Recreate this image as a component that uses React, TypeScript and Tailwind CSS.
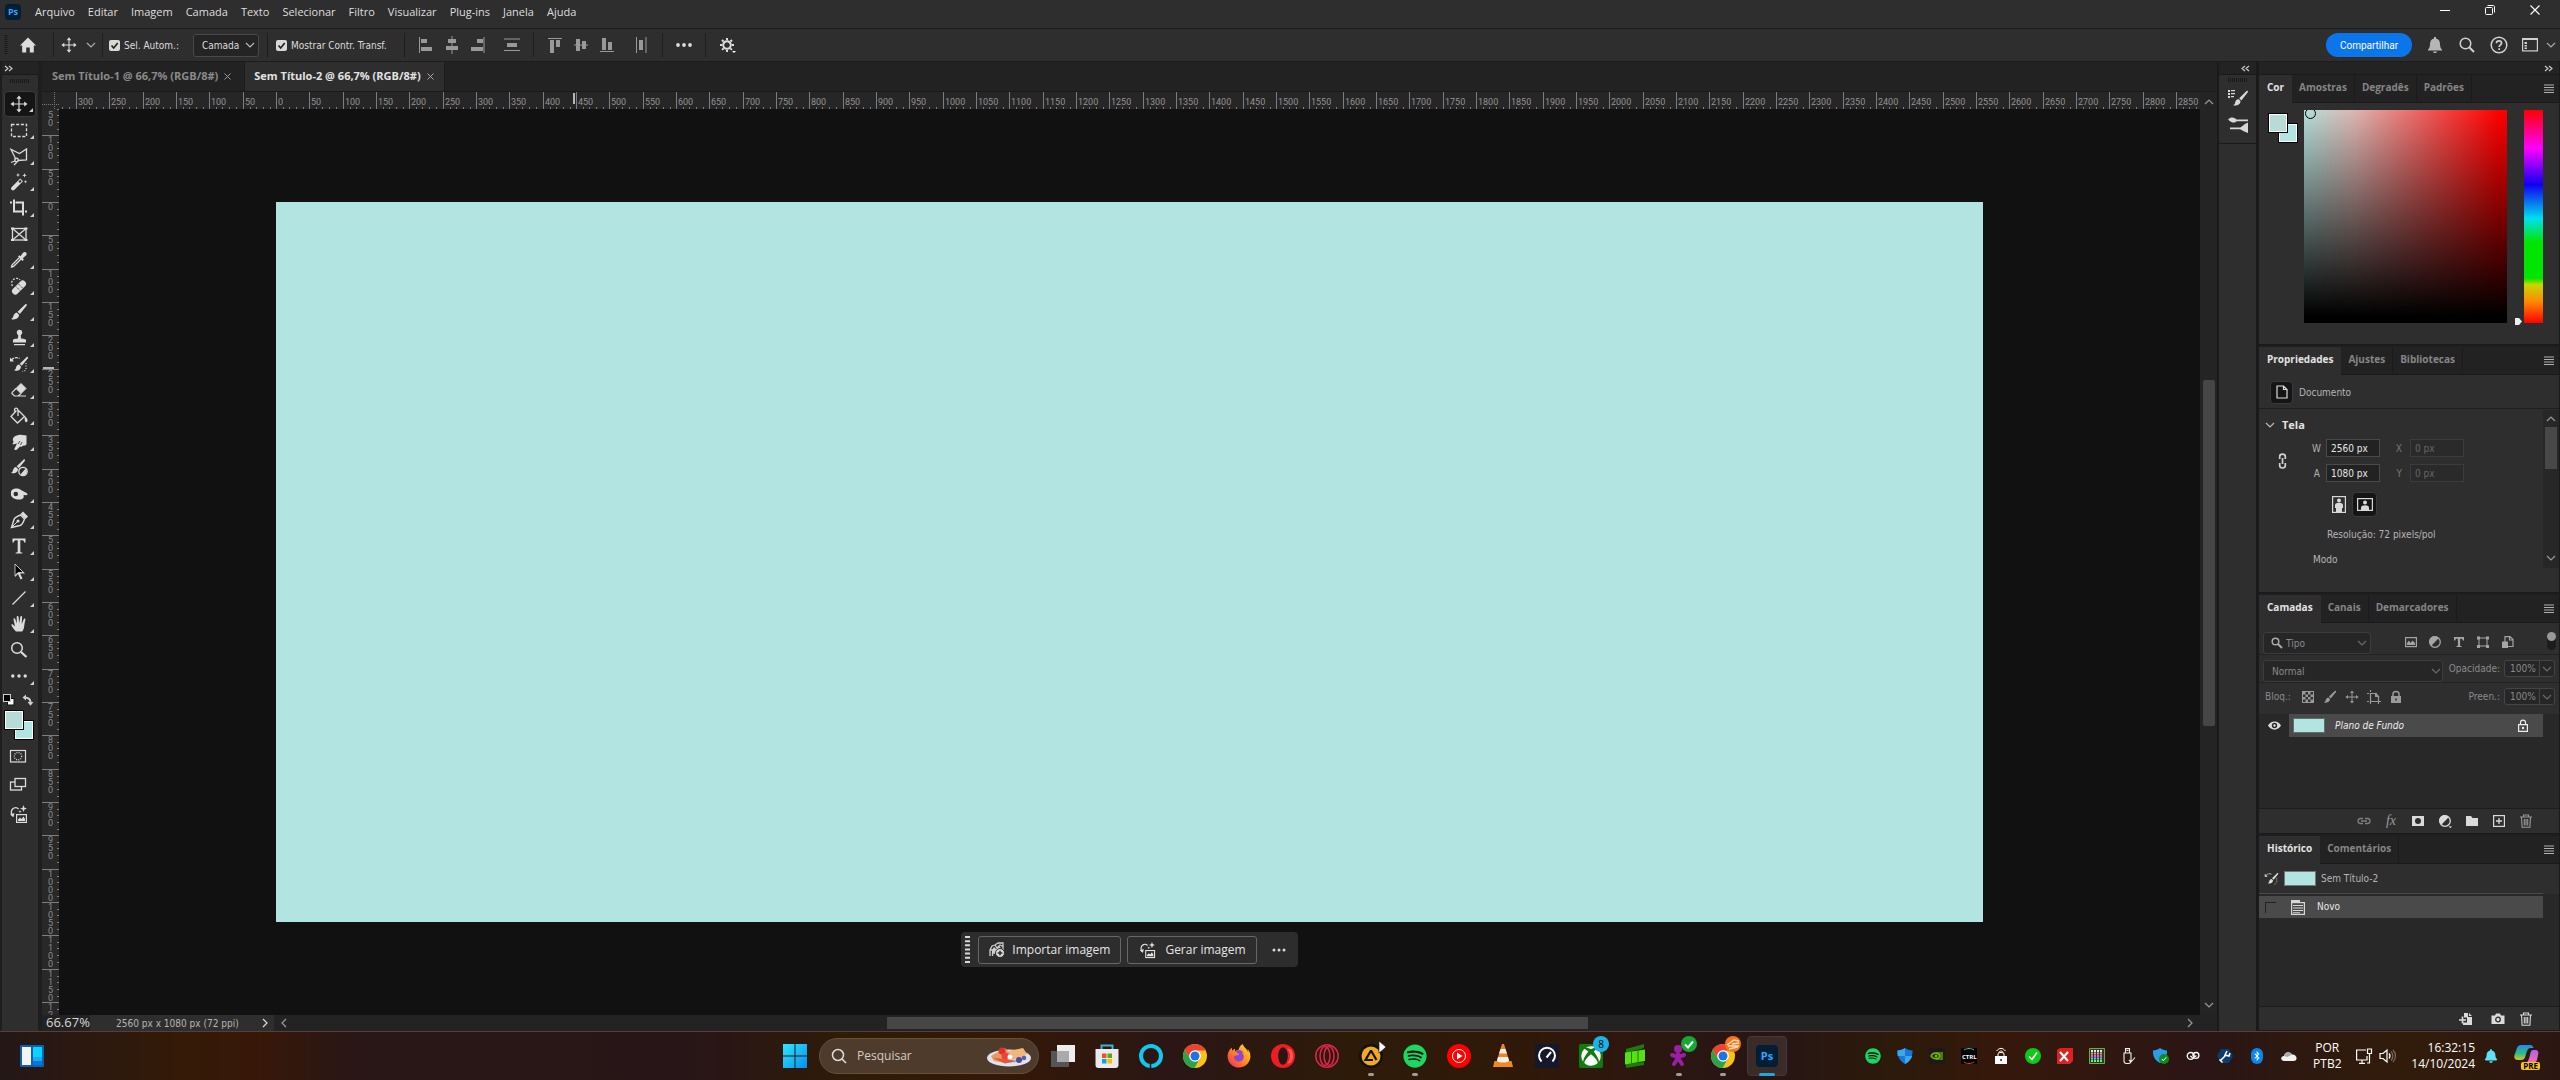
import React from "react";
import { FaSpotify, FaXbox, FaBluetoothB, FaFirefoxBrowser, FaBell } from "react-icons/fa";

type Kids = { children?: React.ReactNode };

function Svg({ s = 20, w, h, vb, className = "", children }: Kids & { s?: number; w?: number; h?: number; vb?: string; className?: string }) {
  return (
    <svg width={w ?? s} height={h ?? s} viewBox={vb ?? `0 0 ${w ?? s} ${h ?? s}`} className={`shrink-0 ${className}`} fill="none" stroke="none" aria-hidden="true">
      {children}
    </svg>
  );
}

function Chevron({ dir = "down", className = "" }: { dir?: "down" | "up" | "left" | "right"; className?: string }) {
  const d = { down: "M1 3l4 4 4-4", up: "M1 7l4-4 4 4", left: "M7 1L3 5l4 4", right: "M3 1l4 4-4 4" }[dir];
  return (
    <Svg s={10} className={className}>
      <path d={d} stroke="currentColor" strokeWidth="1.2" />
    </Svg>
  );
}

function DoubleChevron({ dir }: { dir: "left" | "right" }) {
  return (
    <Svg w={9} h={7}>
      <path d={dir === "right" ? "M1 1l3 2.5L1 6M5 1l3 2.5L5 6" : "M4 1L1 3.5 4 6M8 1L5 3.5 8 6"} stroke="#c8c8c8" strokeWidth="1.2" />
    </Svg>
  );
}

function Sep() {
  return <span className="h-6 w-px shrink-0 bg-[#1e1e1e]" />;
}

/* ---------- Tools ---------- */

const moveShape = (
  <g fill="currentColor">
    <path d="M9.4 4h1.2v12H9.4zM4 9.4h12v1.2H4z" />
    <path d="M10 1.5l2.6 3.3H7.4zM10 18.5l2.6-3.3H7.4zM1.5 10l3.3-2.6v5.2zM18.5 10l-3.3-2.6v5.2z" />
  </g>
);

const brushShape = (
  <g fill="currentColor">
    <path d="M17.5 2.2c.6.5.4 1 0 1.6l-6.600 8.200-2.300-2.300 7.500-7.300c.5-.5.9-.6 1.400-.2z" />
    <path d="M7.800 10.600l2.200 2.100c0 2.600-1.800 5-6.500 4.700-.6 0-1-.3-1.200-.6 1.400-.4 1.700-1.200 2.100-2.700.5-1.900 1.700-3.200 3.400-3.500z" />
  </g>
);

const genShape = (
  <g>
    <path d="M5.500 12.500C2.500 11 2.500 5.500 6 4c1.800-.7 3.500-.2 4.600 1" stroke="currentColor" strokeWidth="1.300" />
    <path d="M2 10.500l3.500 2.300 1-3.800z" fill="currentColor" />
    <path d="M15.500 1l1 2.700 2.500.8-2.500.9-1 2.600-.9-2.600L12 4.500l2.600-.8zM12 6l.5 1.200 1.200.4-1.200.5L12 9.300l-.5-1.200-1.200-.5 1.200-.4z" fill="currentColor" />
    <rect x="8.600" y="10.600" width="9.800" height="7.800" stroke="currentColor" strokeWidth="1.200" />
    <path d="M10 17v-1.500l2-2 1.500 1.500 2-2.500 1.500 2.500v2z" fill="currentColor" />
  </g>
);

const TOOLS: { name: string; corner?: boolean; icon: React.ReactNode }[] = [
  { name: "Mover", corner: true, icon: moveShape },
  { name: "Letreiro retangular", corner: true, icon: <rect x="2.500" y="4.500" width="15" height="12" stroke="currentColor" strokeWidth="1.300" strokeDasharray="3 1.700" /> },
  { name: "Laço poligonal", corner: true, icon: <g stroke="currentColor" strokeWidth="1.300"><path d="M7 13.500L2 3.500l8.500 4 7-4.500v11l-9 .5" /><circle cx="7.500" cy="14" r="1.800" /><path d="M6 15l-4 1.500M8 16l-3 3" /></g> },
  { name: "Varinha mágica", corner: true, icon: <g fill="currentColor"><path d="M2.500 15.300l8.800-8.800 2.700 2.700-8.800 8.800c-1.900 1.400-4.100-.8-2.700-2.700z" /><path d="M9.500 9.500l1.700-1.700 1.400 1.400-1.700 1.700z" fill="#2e2e2e" /><path d="M9 1l.6 1.500L11 3l-1.400.6L9 5l-.6-1.400L7 3l1.400-.5zM15.500 1l.6 1.700 1.700.6-1.700.6-.6 1.700-.6-1.700-1.700-.6 1.700-.6zM16.500 8l.5 1.300 1.200.5-1.200.5-.5 1.200-.5-1.200-1.200-.5 1.200-.5z" /></g> },
  { name: "Corte demarcado", corner: true, icon: <path d="M5 1.500v12h9M1 4.500h2M6.500 4.500H14v13M16 13.500h2" stroke="currentColor" strokeWidth="2" /> },
  { name: "Quadro", icon: <g stroke="currentColor" strokeWidth="1.300"><rect x="3.500" y="4.500" width="13.500" height="11.500" /><path d="M3.500 4.500L17 16M17 4.500L3.500 16" /><path d="M2 4.500h3M15.500 4.500h3M2 16h3M15.500 16h3" strokeWidth="2" /></g> },
  { name: "Conta-gotas", corner: true, icon: <g><path d="M10.500 7.500l-7 7c-.6.600-1 2.500-1 2.500s1.900-.3 2.500-1l7.300-7.200" stroke="currentColor" strokeWidth="1.300" /><path d="M9 6.500l1.300-1.300 1.200 1 2.300-3.200c1-1.300 2.500-1.400 3.300-.5.900.9.800 2.200-.4 3.300l-3 2.500 1.200 1.200L13.500 11z" fill="currentColor" /></g> },
  { name: "Pincel de recuperação", corner: true, icon: <g><path d="M3.500 10c-1.500-2-1-5 1-6.500s5-1.500 6.500.5" stroke="currentColor" strokeWidth="1.200" strokeDasharray="2 1.300" /><rect x="1.500" y="8.200" width="17" height="6.600" rx="3.300" transform="rotate(-45 10 11.500)" fill="currentColor" /><path d="M7 10.500l4 4M9.500 8l4 4" stroke="#2e2e2e" strokeWidth="1" strokeDasharray="1.200 1" /></g> },
  { name: "Pincel", corner: true, icon: brushShape },
  { name: "Carimbo", corner: true, icon: <g fill="currentColor"><circle cx="10.500" cy="4.500" r="2.700" /><path d="M9.300 6h2.400l.3 4.500c2 .2 5 .5 5 1.500v2.500H4V12c0-1 3-1.300 5-1.500zM5 16h11v1.300H5z" /></g> },
  { name: "Pincel do histórico", corner: true, icon: <g><g transform="translate(3 1) scale(.9)">{brushShape}</g><path d="M2.500 6c2-2.600 5.500-3 8-1.500" stroke="currentColor" strokeWidth="1.200" strokeDasharray="3 1" /><path d="M1 3.500v4h4z" fill="currentColor" /><path d="M17 9v6c-.5 1.500-2 2.500-3.500 2.500" stroke="currentColor" strokeWidth="1.200" strokeDasharray="1 1.500" /></g> },
  { name: "Borracha", corner: true, icon: <g><path d="M7 8.500l5-5 5 5-5 5z" fill="currentColor" stroke="currentColor" /><path d="M7 8.500l-3.800 3.800c-.5.500-.5 1 0 1.500L5.500 16H9l3-2.500M8 16h9" stroke="currentColor" strokeWidth="1.200" /></g> },
  { name: "Lata de tinta", corner: true, icon: <g><path d="M7.500 4.500L2 10.500l6.500 6.500 7-6.500-6-6M9 10V4C8.500 1.500 6 1.500 5.500 3.500l.5 3" stroke="currentColor" strokeWidth="1.300" /><path d="M14.500 9.500c2 1 4.500 3 4 5.500-.3 1.500-2.300 1.500-2.600 0-.3-2 .1-4-1.400-5.500z" fill="currentColor" /></g> },
  { name: "Borrar", corner: true, icon: <g><path d="M4.500 5.500C6.500 3.500 10 2.500 13 3l4.500.5v9c-1 1-2 1.500-3.500 1-1 1.500-2 1.500-3 1L8 17.500c-1.500 1.200-3 .5-2.500-1l2.500-5-4 1c-.8-.6-.2-2 .8-2.600C3.500 9 3.600 6.500 4.500 5.500z" fill="currentColor" /><path d="M9 12l2-3M11.500 13l1.500-3" stroke="#2e2e2e" strokeWidth=".8" /></g> },
  { name: "Pincel misturador", corner: false, icon: <g><g transform="translate(0 -.5) scale(.9)">{brushShape}</g><circle cx="14" cy="13.500" r="4.200" fill="#2e2e2e" stroke="currentColor" strokeWidth="1.300" /><path d="M11.500 16.300l5-5.600c2 2 1.500 4.500-.5 6-1.500 1-3.300.800-4.500-.4z" fill="currentColor" /></g> },
  { name: "Superexposição", corner: true, icon: <g><path d="M2.500 6.500C5 4 9 4 12 6l6 3.200c1 .8.500 2-.8 2l-2.700-.2c1 3-1 4.500-4 4.500-5 0-8-2-8.500-4.500-.2-2 0-3.500.5-4.500z" fill="currentColor" /><circle cx="6.800" cy="10" r="2.300" fill="#2e2e2e" /></g> },
  { name: "Caneta", corner: true, icon: <g><path d="M2.500 17.500L5 9.500c.5-1.500 4-3.500 6.500-4.500l4 4c-1 3-3 6-4.500 6.500z" stroke="currentColor" strokeWidth="1.400" /><path d="M3 17l5.500-5.500" stroke="currentColor" /><circle cx="9" cy="11" r="1.500" fill="currentColor" /><path d="M11.500 4l2.500-2.500 5 5L16.500 9z" fill="currentColor" /></g> },
  { name: "Texto", corner: true, icon: <path d="M3.500 2.500h13v4h-1.300c-.3-1.700-.8-2.300-2.700-2.300h-1.200v11.300c0 .8.500 1 2 1.100v1H6.700v-1c1.500-.1 2-.3 2-1.100V4.200H7.500c-1.900 0-2.400.6-2.700 2.300H3.500z" fill="currentColor" /> },
  { name: "Seleção de caminho", corner: true, icon: <g><path d="M6 2l10 9.500h-5l2.500 5-2 1-2.500-5.500L6 15z" fill="currentColor" /><path d="M6 2l8.500 8.500H9L6 13.500z" fill="#050505" stroke="currentColor" strokeWidth=".8" /></g> },
  { name: "Linha", corner: true, icon: <path d="M3.500 16.500l13-13" stroke="currentColor" strokeWidth="1.200" /> },
  { name: "Mão", corner: true, icon: <path d="M7 17.500c-1.500-1.500-3.500-4-4.500-6-.4-1 .8-1.600 1.600-.8L6 12.600 4.500 5.500c-.2-1.300 1.400-1.600 1.700-.4L7.800 9.500 7.700 3c0-1.400 1.800-1.400 1.900 0l.6 6.300L11.300 3c.2-1.300 1.900-1.100 1.800.2l-.4 6.800 2-4.800c.5-1.200 2-.7 1.700.6-.6 2.700-.9 4-1.200 6.500-.3 2.200-.8 3.800-2 5.200z" fill="currentColor" /> },
  { name: "Zoom", corner: false, icon: <g stroke="currentColor"><circle cx="8" cy="8" r="5.300" strokeWidth="1.500" /><path d="M12 12l5.500 5" strokeWidth="2.300" /></g> },
  { name: "Editar barra de ferramentas", corner: true, icon: <g fill="currentColor"><circle cx="3.800" cy="10" r="1.700" /><circle cx="10" cy="10" r="1.700" /><circle cx="16.200" cy="10" r="1.700" /></g> },
];

function Swatches() {
  return (
    <div className="relative size-[30px] shrink-0">
      <button aria-label="Cor do plano de fundo" className="absolute right-0 bottom-0 size-5 border border-black bg-[#b2e5e2] outline-1 -outline-offset-2 outline-white" />
      <button aria-label="Cor do primeiro plano" className="absolute top-0 left-0 size-5 border border-black bg-[#b7dbd7] outline-1 -outline-offset-2 outline-white" />
    </div>
  );
}

function Toolbar() {
  return (
    <aside className="flex w-[42px] shrink-0 flex-col border-r-4 border-l-2 border-[#1e1e1e] bg-[#2e2e2e] text-[#dcdcdc]">
      <div className="flex h-[13px] items-center border-b border-[#1a1a1a] bg-[#232323] pl-0.5">
        <DoubleChevron dir="right" />
      </div>
      <div className="flex h-4 items-start justify-center pt-1">
        <Grip />
      </div>
      <div className="flex flex-col">
        {TOOLS.map((t, i) => (
          <button key={t.name} aria-label={t.name} className={i === 0 ? "relative mr-0.5 ml-0.5 flex h-[26px] items-center rounded-sm border border-[#3c3c3c] bg-[#151515] pl-1" : "relative mr-0.5 ml-0.5 flex h-[26px] items-center pl-[5px]"}>
            <Svg s={20}>{t.icon}</Svg>
            {t.corner && (
              <Svg s={4} className="absolute right-0.5 bottom-1">
                <path d="M4 0v4H0z" fill="#cfcfcf" />
              </Svg>
            )}
          </button>
        ))}
      </div>
      <div className="flex h-[21px] items-center justify-between pr-1 pl-px">
        <button aria-label="Cores padrão">
          <Svg s={12}>
            <rect x="4.500" y="4.500" width="6.500" height="6.500" fill="#fff" stroke="#111" />
            <rect x=".5" y=".5" width="7" height="7" fill="#000" stroke="#ccc" />
          </Svg>
        </button>
        <button aria-label="Alternar cores">
          <Svg s={12}>
            <path d="M2.500 3.500c4 0 6 1.500 6 5" stroke="#cfcfcf" strokeWidth="2" />
            <path d="M4 .5v6L.5 3.500zM5.500 8h6l-3 3.800z" fill="#cfcfcf" />
          </Svg>
        </button>
      </div>
      <div className="pl-0.5">
        <Swatches />
      </div>
      <div className="flex flex-col items-start gap-2 pt-1.5 pl-1.5">
        <button aria-label="Máscara rápida" className="h-5">
          <Svg s={20}>
            <rect x="2.500" y="4.500" width="15" height="11.500" stroke="currentColor" strokeWidth="1.200" />
            <circle cx="10" cy="10.200" r="3.700" stroke="currentColor" strokeWidth="1.300" strokeDasharray="1 1.200" />
          </Svg>
        </button>
        <button aria-label="Modo de tela" className="h-5">
          <Svg s={20}>
            <rect x="2.500" y="8" width="11" height="8" stroke="currentColor" strokeWidth="1.300" />
            <rect x="7" y="4.500" width="10.500" height="8" fill="#2e2e2e" stroke="currentColor" strokeWidth="1.300" />
          </Svg>
        </button>
        <button aria-label="Gerar imagem" className="mt-0.5 h-5">
          <Svg s={20}>{genShape}</Svg>
        </button>
      </div>
    </aside>
  );
}

function Grip() {
  return (
    <Svg w={20} h={4}>
      <path d="M0 2h20" stroke="#191919" strokeWidth="4" strokeDasharray="1 1" />
    </Svg>
  );
}

/* ---------- Title and options bars ---------- */

const MENUS = ["Arquivo", "Editar", "Imagem", "Camada", "Texto", "Selecionar", "Filtro", "Visualizar", "Plug-ins", "Janela", "Ajuda"];

function TitleBar() {
  return (
    <header className="flex h-[29px] shrink-0 items-start border-b border-[#1c1c1c]">
      <span className="mt-1 ml-[5px] flex size-4 items-center justify-center rounded-sm bg-[#001e36] text-[9px] font-bold text-[#31a8ff]">Ps</span>
      <nav className="ml-3.5 flex gap-[13px] text-[11px] leading-[24px] text-[#dedede]">
        {MENUS.map((m) => (
          <button key={m}>{m}</button>
        ))}
      </nav>
      <div className="ml-auto flex h-5 items-center gap-[35px] pr-5 text-white">
        <button aria-label="Minimizar">
          <Svg s={10}><path d="M0 5.500h10" stroke="currentColor" /></Svg>
        </button>
        <button aria-label="Restaurar">
          <Svg s={10}><rect x=".5" y="2.500" width="7" height="7" rx="1" stroke="currentColor" /><path d="M2.500.5H8c1 0 1.500.5 1.500 1.500v5.500" stroke="currentColor" /></Svg>
        </button>
        <button aria-label="Fechar">
          <Svg s={10}><path d="M.5.5l9 9M9.500.5l-9 9" stroke="currentColor" strokeWidth="1.100" /></Svg>
        </button>
      </div>
    </header>
  );
}

function Check({ label }: { label: string }) {
  return (
    <label className="flex items-center gap-1 whitespace-nowrap">
      <span className="relative flex size-[11px]">
        <input type="checkbox" defaultChecked className="size-[11px] appearance-none rounded-xs bg-[#d8d8d8]" />
        <Svg s={11} className="pointer-events-none absolute inset-0">
          <path d="M2.500 5.500l2.200 2.500 4-5" stroke="#222" strokeWidth="1.700" />
        </Svg>
      </span>
      {label}
    </label>
  );
}

const ALIGN: [string, React.ReactNode][] = [
  ["Alinhar à esquerda", <path key="a" d="M1 1h1v16H1zM3 3h6v4H3zM3 11h11v4H3z" />],
  ["Centralizar na horizontal", <path key="a" d="M7.500 0h1v18h-1zM4 3h8v4H4zM2 10h12v4H2z" />],
  ["Alinhar à direita", <path key="a" d="M13.500 1h1v16h-1zM7 3h6v4H7zM1 11h12v4H1z" />],
  ["Distribuir na vertical", <path key="a" d="M0 2.500h16v1H0zM0 14h16v1H0zM3 7h10v4H3z" />],
  ["Alinhar ao topo", <path key="a" d="M1 2h14v1H1zM3 4h4v13H3zM9 4h4v7H9z" />],
  ["Centralizar na vertical", <path key="a" d="M1 8.500h14v1H1zM3 3h4v12H3zM9 5h4v8H9z" />],
  ["Alinhar à base", <path key="a" d="M1 15h14v1H1zM3 2h4v12H3zM9 6h4v8H9z" />],
  ["Distribuir na horizontal", <path key="a" d="M3 1h1v16H3zM12.500 1h1v16h-1zM6 4h4v10H6z" />],
];

function AlignButton({ i }: { i: number }) {
  return (
    <button aria-label={ALIGN[i][0]} className="w-4 text-[#999]">
      <Svg w={16} h={18}><g fill="currentColor">{ALIGN[i][1]}</g></Svg>
    </button>
  );
}

function OptionsBar() {
  return (
    <div className="flex h-[33px] shrink-0 items-center border-b border-[#1c1c1c] font-[family-name:'DejaVu_Sans_Condensed','DejaVu_Sans',sans-serif] text-[10px] text-[#dcdcdc]">
      <div className="flex w-[53px] items-center pl-1">
        <Svg w={4} h={20}><path d="M2 0v20" stroke="#191919" strokeWidth="3" strokeDasharray="1 1" /></Svg>
        <button aria-label="Início" className="ml-[11px]">
          <Svg s={18}><path d="M9 1.500L1 9.500h2.200v7H7.200v-5h3.600v5h4v-7H17z" fill="currentColor" /></Svg>
        </button>
      </div>
      <Sep />
      <button aria-label="Ferramenta atual" className="flex w-12 items-center gap-2 pl-1.5">
        <Svg s={18} vb="0 0 20 20">{moveShape}</Svg>
        <Chevron className="text-[#aaa]" />
      </button>
      <Sep />
      <div className="flex w-[164px] items-center justify-between pr-2 pl-1.5">
        <Check label="Sel. Autom.:" />
        <div className="relative flex items-center">
          <select aria-label="Seleção automática" defaultValue="Camada" className="h-[23px] w-[66px] appearance-none rounded-[3px] border border-[#484848] bg-[#242424] pl-2 text-[10px]">
            <option>Camada</option>
            <option>Grupo</option>
          </select>
          <Chevron className="pointer-events-none absolute right-1 text-[#bbb]" />
        </div>
      </div>
      <Sep />
      <div className="w-[136px] pl-2"><Check label="Mostrar Contr. Transf." /></div>
      <Sep />
      <div className="flex w-32 items-center gap-2.5 pl-[13px]">
        <AlignButton i={0} />
        <AlignButton i={1} />
        <AlignButton i={2} />
        <span className="ml-2 flex"><AlignButton i={3} /></span>
      </div>
      <Sep />
      <div className="flex w-32 items-center gap-2.5 pl-[13px]">
        <AlignButton i={4} />
        <AlignButton i={5} />
        <AlignButton i={6} />
        <span className="ml-2 flex"><AlignButton i={7} /></span>
      </div>
      <Sep />
      <button aria-label="Mais opções" className="flex w-[42px] justify-center">
        <Svg w={18} h={6}><g fill="currentColor"><circle cx="3" cy="3" r="1.900" /><circle cx="9" cy="3" r="1.900" /><circle cx="15" cy="3" r="1.900" /></g></Svg>
      </button>
      <Sep />
      <button aria-label="Configurações" className="ml-3.5">
        <Svg w={18} h={16}>
          <circle cx="7" cy="8" r="3.700" stroke="currentColor" strokeWidth="2.200" />
          <path d="M7 1v14M0 8h14M2 3l10 10M12 3L2 13" stroke="currentColor" strokeWidth="2" strokeDasharray="2.200 9.600" />
          <circle cx="7" cy="8" r="2.500" fill="#2e2e2e" />
          <path d="M12 14h4l-2 2z" fill="#fff" />
        </Svg>
      </button>
      <div className="ml-auto flex items-center pr-1 text-[#d0d0d0]">
        <button className="h-6 w-[86px] rounded-full bg-[#0b76ec] text-center font-[family-name:'Roboto',sans-serif] text-white">Compartilhar</button>
        <button aria-label="Notificações" className="ml-3.5"><Svg s={18}><path d="M8 1h2v1.500c3 .5 4 3 4 5.500 0 3 .8 4.500 2 5.500v1H2v-1c1.200-1 2-2.500 2-5.500 0-2.500 1-5 4-5.500zM7 15.500h4c-.3 2-3.700 2-4 0z" fill="#b5b5b5" /></Svg></button>
        <button aria-label="Pesquisar no aplicativo" className="ml-3.5"><Svg s={18}><circle cx="7.500" cy="7.500" r="5.300" stroke="currentColor" strokeWidth="1.500" /><path d="M11.500 11.500l4.500 4.500" stroke="currentColor" strokeWidth="2" /></Svg></button>
        <button aria-label="Ajuda" className="ml-3.5"><Svg s={18}><circle cx="9" cy="9" r="7.800" stroke="currentColor" strokeWidth="1.500" /><path d="M6.500 7.200c0-3 5-3 5 0 0 1.800-2.300 1.700-2.300 3.800M9.200 12.300v1.800" stroke="currentColor" strokeWidth="1.700" /></Svg></button>
        <button aria-label="Área de trabalho" className="ml-3.5 flex items-center gap-2">
          <Svg w={16} h={14}><rect x=".6" y=".6" width="14.800" height="12.300" stroke="currentColor" strokeWidth="1.200" /><path d="M.6 1.500h15" stroke="currentColor" /><path d="M2.500 4h2.500v2H2.500zM2.500 7h2.500v1.500H2.500zM2.500 9.500h2.500V11H2.500z" fill="currentColor" /></Svg>
          <Chevron className="text-[#aaa]" />
        </button>
      </div>
    </div>
  );
}

/* ---------- Document area ---------- */

const UNIT = 100 / 3;

function HorizontalRuler() {
  const majors = Array.from({ length: 64 }, (_, i) => i - 6);
  return (
    <svg className="h-[17px] w-full min-w-0 flex-1" shapeRendering="crispEdges" fill="#7d7d7d" aria-hidden="true">
      {majors.map((k) => {
        const x = Math.round(217 + k * UNIT);
        return (
          <g key={k}>
            <path d={`M${x} 0h1v17h-1z`} />
            {[1, 2, 3, 4].map((n) => (
              <rect key={n} x={x + Math.round((n * UNIT) / 5)} y="15" width="1" height="2" />
            ))}
            <text x={x + 2} y="13" fontSize="9" fill="#939393">{Math.abs(k * 50)}</text>
          </g>
        );
      })}
      <path d="M3 15h1v2H3zM10 15h1v2h-1z" />
      <path d="M514 1h2v11h-2z" fill="#b5b5b5" />
    </svg>
  );
}

function VerticalRuler() {
  const majors = Array.from({ length: 28 }, (_, i) => i - 3);
  return (
    <svg className="w-[17px] shrink-0 self-stretch bg-[#282828]" shapeRendering="crispEdges" fill="#7d7d7d" aria-hidden="true">
      {majors.map((k) => {
        const y = Math.round(93 + k * UNIT);
        return (
          <g key={k}>
            <path d={`M0 ${y}h17v1H0z`} />
            {[1, 2, 3, 4].map((n) => (
              <rect key={n} x="15" y={y + Math.round((n * UNIT) / 5)} width="2" height="1" />
            ))}
            {String(Math.abs(k * 50)).split("").map((c, n) => {
              const base = y + 8 + n * 8;
              return base > 6 && base < 912 ? <text key={n} x="6" y={base} fontSize="9" fill="#8c8c8c">{c}</text> : null;
            })}
          </g>
        );
      })}
      <path d="M1 258h11v2H1z" fill="#b5b5b5" />
    </svg>
  );
}

function ContextBar() {
  return (
    <div className="absolute top-full left-0 flex w-full justify-center pt-2.5">
      <div className="flex h-[35px] items-center rounded bg-[#2d2d2d] pl-1 text-xs text-[#e6e6e6]">
        <Svg w={5} h={27} className="mr-2"><path d="M2.500 0v27" stroke="#d8d8d8" strokeWidth="5" strokeDasharray="2 2.150" /></Svg>
        <button className="flex h-7 items-center gap-[7px] rounded-[3px] border border-[#666] px-2.5">
          <Svg s={16}>
            <path d="M1 14V8l2-4 3-1 3-2h5v8M1 8h6M6 3l2 3 3-3 3 1.500M3.500 14v-3h3" stroke="#cfcfcf" strokeWidth="1.300" />
            <path d="M3 8l2-3 2 2 3-3 2 2-4 5H3z" fill="#cfcfcf" />
            <circle cx="11" cy="11" r="4.500" fill="#d8d8d8" stroke="#2d2d2d" />
            <path d="M11 8.700v4.600M8.700 11h4.600" stroke="#2d2d2d" strokeWidth="1.500" />
          </Svg>
          Importar imagem
        </button>
        <button className="ml-1.5 flex h-7 items-center gap-[9px] rounded-[3px] border border-[#666] px-2.5">
          <Svg s={18} vb="0 0 20 20">{genShape}</Svg>
          Gerar imagem
        </button>
        <button aria-label="Mais" className="mr-3 ml-[15px]">
          <Svg w={14} h={4}><g fill="#d8d8d8"><circle cx="2" cy="2" r="1.500" /><circle cx="7" cy="2" r="1.500" /><circle cx="12" cy="2" r="1.500" /></g></Svg>
        </button>
      </div>
    </div>
  );
}

function DocumentArea() {
  return (
    <main className="flex min-w-0 flex-1 flex-col">
      <div className="flex h-[30px] shrink-0 border-b border-[#1a1a1a] bg-[#222] text-[11px] font-bold">
        <div className="flex items-center gap-1.5 pr-[11px] pl-2.5 text-[#8a8a8a]">
          <button>Sem Título-1 @ 66,7% (RGB/8#)</button>
          <button aria-label="Fechar Sem Título-1" className="mr-0.5"><Svg s={7}><path d="M.5.5l6 6M6.500.5l-6 6" stroke="#999" /></Svg></button>
        </div>
        <div className="flex items-center gap-1.5 border-x border-[#1c1c1c] bg-[#2e2e2e] px-[9px] text-[#e2e2e2]">
          <button>Sem Título-2 @ 66,7% (RGB/8#)</button>
          <button aria-label="Fechar Sem Título-2" className="mr-px"><Svg s={7}><path d="M.5.5l6 6M6.500.5l-6 6" stroke="#aaa" /></Svg></button>
        </div>
      </div>
      <div className="flex min-h-0 flex-1">
        <div className="flex min-w-0 flex-1 flex-col font-[family-name:'Roboto',sans-serif]">
          <div className="flex shrink-0 bg-[#262626]">
            <Svg s={17}><path d="M12.500 0v17M0 12.500h17" stroke="#777" strokeDasharray="1 1" /></Svg>
            <HorizontalRuler />
          </div>
          <div className="flex min-h-0 flex-1">
            <VerticalRuler />
            <div className="relative min-w-0 flex-1 overflow-hidden bg-[#111]">
              <div className="absolute top-[93px] left-[217px] h-[720px] w-[1707px] bg-[#b2e5e2] font-[family-name:'Open_Sans',sans-serif]">
                <ContextBar />
              </div>
            </div>
          </div>
        </div>
        <div className="flex w-[17px] shrink-0 flex-col items-center bg-[#242424] text-[#999]">
          <button aria-label="Rolar para cima" className="flex h-5 items-center"><Chevron dir="up" /></button>
          <span className="grow-[268]" />
          <span className="w-3 grow-[346] rounded-xs bg-[#464646]" />
          <span className="grow-[269]" />
          <button aria-label="Rolar para baixo" className="flex h-5 items-center"><Chevron /></button>
        </div>
      </div>
      <div className="flex h-4 shrink-0 items-center bg-[#232323] text-[#999]">
        <input aria-label="Zoom" defaultValue="66.67%" className="h-4 w-12 shrink-0 bg-[#222] pl-1 text-[13px] text-[#d8d8d8] outline-none" />
        <div className="flex h-4 w-[184px] shrink-0 items-center justify-between bg-[#2e2e2e] pr-1 pl-[26px] font-[family-name:'DejaVu_Sans_Condensed','DejaVu_Sans',sans-serif] text-[10px] text-[#b5b5b5]">
          2560 px x 1080 px (72 ppi)
          <button aria-label="Informações"><Chevron dir="right" className="text-[#ddd]" /></button>
        </div>
        <button aria-label="Rolar para a esquerda" className="flex w-5 justify-center"><Chevron dir="left" /></button>
        <span className="grow-[593]" />
        <span className="h-3 grow-[700] bg-[#464646]" />
        <span className="grow-[592]" />
        <button aria-label="Rolar para a direita" className="mr-[17px] flex w-5 justify-center"><Chevron dir="right" /></button>
      </div>
    </main>
  );
}

/* ---------- Panels ---------- */

function Panel({ tabs, className = "", children }: Kids & { tabs: string[]; className?: string }) {
  return (
    <section className={`flex flex-col border-b border-[#1a1a1a] bg-[#2e2e2e] ${className}`}>
      <div className="flex h-7 shrink-0 items-stretch border-b border-[#1a1a1a] bg-[#222] pr-[5px] font-[family-name:'Open_Sans',sans-serif] text-[10px] font-bold text-[#868686]" role="tablist">
        {tabs.map((t, i) => (
          <button key={t} role="tab" aria-selected={i === 0} className={i === 0 ? "-mb-px bg-[#2e2e2e] px-2 pb-1 text-[#e4e4e4]" : "border-r border-[#1b1b1b] px-[7px] pb-[3px]"}>{t}</button>
        ))}
        <button aria-label="Menu do painel" className="ml-auto">
          <Svg w={10} h={9}><path d="M0 1h10M0 3.500h10M0 6h10M0 8.500h10" stroke="#b0b0b0" /></Svg>
        </button>
      </div>
      {children}
    </section>
  );
}

function ColorPanel() {
  return (
    <Panel tabs={["Cor", "Amostras", "Degradês", "Padrões"]} className="h-[270px]">
      <div className="flex pt-[7px] pl-[9px]">
        <div className="pt-[3px]"><Swatches /></div>
        <div className="relative ml-1.5 h-[213px] w-[203px] overflow-hidden bg-[linear-gradient(to_top,#000_3%,transparent),linear-gradient(to_right,#b3dfda,#dcb5b1_25%,#f00_96%)]">
          <span className="absolute -top-0.5 left-px size-[11px] rounded-full border border-black" />
        </div>
        <div className="flex items-end pr-0.5 pl-2">
          <Svg w={7} h={7} className="-mb-0.5"><path d="M0 0h4l3 3.500L4 7H0z" fill="#eee" /></Svg>
        </div>
        <div className="h-[213px] w-[19px] bg-[linear-gradient(to_bottom,#f00,#f0f_18%,#1000f0_35%,#00e0f0_51%,#00e600_62%,#00e600_79%,#c8d800_82%,#f80_90%,#f00)]" />
      </div>
    </Panel>
  );
}

function Field({ label, value, off }: { label: string; value: string; off?: boolean }) {
  return (
    <label className={off ? "flex items-center gap-2 text-[#777]" : "flex items-center gap-1.5 text-[#b0b0b0]"}>
      <span className="w-2 text-right">{label}</span>
      <input defaultValue={value} disabled={off} className={off ? "h-[18px] w-[54px] border border-[#3c3c3c] bg-[#2a2a2a] px-1 text-[#666]" : "h-[18px] w-[54px] border border-[#4a4a4a] bg-[#222] px-1 text-[#e6e6e6]"} />
    </label>
  );
}

function PropertiesPanel() {
  return (
    <Panel tabs={["Propriedades", "Ajustes", "Bibliotecas"]} className="h-[246px]">
      <div className="flex h-[34px] items-center gap-1.5 border-b border-[#1e1e1e] pt-px pl-[11px] text-[#b5b5b5]">
        <span className="flex size-[23px] items-center justify-center rounded-sm border border-[#3a3a3a] bg-[#151515]">
          <Svg w={12} h={14}><path d="M1 1h6.500L11 4.500V13H1zM7.500 1v3.500H11" stroke="#ddd" strokeWidth="1.200" /></Svg>
        </span>
        Documento
      </div>
      <div className="flex">
        <div className="flex-1">
          <button className="mt-2 flex items-center gap-[7px] pl-1.5 font-[family-name:'Open_Sans',sans-serif] text-[11px] leading-4 font-bold text-[#e2e2e2]">
            <Chevron className="text-[#bbb]" /> Tela
          </button>
          <div className="mt-1.5 flex items-center pl-[19px]">
            <Svg w={9} h={16}><path d="M1.700 6V3.500c0-3.300 5.600-3.300 5.600 0V6M1.700 10v2.500c0 3.300 5.600 3.300 5.600 0V10M4.500 5v6" stroke="#d0d0d0" strokeWidth="1.700" /></Svg>
            <div className="ml-[25px] grid grid-cols-2 gap-x-3 gap-y-[7px]">
              <Field label="W" value="2560 px" />
              <Field label="X" value="0 px" off />
              <Field label="A" value="1080 px" />
              <Field label="Y" value="0 px" off />
            </div>
          </div>
          <div className="mt-2.5 flex items-center gap-1.5 pl-[73px]">
            <button aria-label="Retrato">
              <Svg w={14} h={17}><rect x=".6" y=".6" width="12.800" height="15.800" stroke="#d8d8d8" strokeWidth="1.200" /><circle cx="7" cy="4.500" r="2" fill="#d8d8d8" /><path d="M3 9c0-3 8-3 8 0v3h-1v4H4v-4H3z" fill="#d8d8d8" /></Svg>
            </button>
            <button aria-label="Paisagem" className="flex size-[25px] items-center justify-center rounded-sm border border-[#3a3a3a] bg-[#151515]">
              <Svg w={16} h={13}><rect x=".6" y=".6" width="14.800" height="11.800" stroke="#d8d8d8" strokeWidth="1.200" /><circle cx="8" cy="4.500" r="2" fill="#d8d8d8" /><path d="M4 12V9.500c0-3 8-3 8 0V12z" fill="#d8d8d8" /></Svg>
            </button>
          </div>
          <p className="mt-2.5 pl-[68px] leading-4 text-[#b5b5b5]">Resolução: 72 pixels/pol</p>
          <p className="mt-[9px] pl-[54px] leading-4 text-[#b5b5b5]">Modo</p>
        </div>
        <div className="mt-px flex h-[158px] w-4 flex-col items-center bg-[#272727] text-[#999]">
          <button aria-label="Rolar para cima" className="flex h-[17px] items-center"><Chevron dir="up" /></button>
          <span className="h-[42px] w-3 bg-[#484848]" />
          <button aria-label="Rolar para baixo" className="mt-auto flex h-5 items-center"><Chevron /></button>
        </div>
      </div>
    </Panel>
  );
}

function Percent({ label, value }: { label: string; value: string }) {
  return (
    <label className="ml-auto flex items-center gap-1">
      {label}
      <span className="flex h-[17px] items-center rounded-[3px] border border-[#444] bg-[#262626]">
        <input defaultValue={value} className="h-[15px] w-[35px] border-r border-[#444] bg-transparent pl-[5px] text-[10px] outline-none" />
        <Chevron className="mx-0.5 text-[#6a6a6a]" />
      </span>
    </label>
  );
}

const maskCircle = (
  <g>
    <circle cx="7" cy="7" r="5.300" stroke="currentColor" strokeWidth="1.300" />
    <path d="M10.700 3.300A5.300 5.300 0 1 0 3.300 10.700z" fill="currentColor" />
  </g>
);

function trashShape(n: number) {
  return <path key={n} d="M1 3h12M4.500 3V1h5v2M2.500 3l.6 10.300h7.800L11.500 3M5.300 5v6.500M7 5v6.500M8.700 5v6.500" stroke="currentColor" strokeWidth="1.100" />;
}

function LayersPanel() {
  return (
    <Panel tabs={["Camadas", "Canais", "Demarcadores"]} className="h-[239px]">
      <div className="flex flex-1 flex-col text-[#8a8a8a]">
        <div className="flex h-8 items-end border-b border-[#222] pr-[3px] pl-1">
          <div className="relative flex items-center">
            <Svg s={12} className="pointer-events-none absolute left-2"><circle cx="4.500" cy="4.500" r="3.300" stroke="#aaa" strokeWidth="1.500" /><path d="M7 7l4 4" stroke="#aaa" strokeWidth="2" /></Svg>
            <select aria-label="Tipo de filtro" className="h-[22px] w-[108px] appearance-none rounded-[3px] border border-[#3c3c3c] bg-[#262626] pl-[22px]"><option>Tipo</option></select>
            <Chevron className="pointer-events-none absolute right-1 text-[#6a6a6a]" />
          </div>
          <div className="mb-[5px] ml-[33px] flex gap-2.5 text-[#a5a5a5]">
            <button aria-label="Filtrar pixels"><Svg s={14}><rect x="1.600" y="2.600" width="10.800" height="9" stroke="currentColor" strokeWidth="1.200" /><path d="M3 10V8l2-2.500L6.500 8l2-2.500L11 8v2z" fill="currentColor" /></Svg></button>
            <button aria-label="Filtrar ajustes"><Svg s={14}>{maskCircle}</Svg></button>
            <button aria-label="Filtrar texto"><Svg s={14}><path d="M2 2h10v3.500h-1.200c-.2-1.200-.6-1.700-1.800-1.700h-.9v6.400c0 .6.300.8 1.400.9V12h-5v-.9c1.100-.1 1.400-.3 1.400-.9V3.800H5c-1.200 0-1.600.5-1.800 1.700H2z" fill="currentColor" /></Svg></button>
            <button aria-label="Filtrar formas"><Svg s={14}><rect x="3" y="3" width="8" height="8" stroke="currentColor" /><path d="M1 1.500h3v3H1zM10 1.500h3v3h-3zM1 10h3v3H1zM10 10h3v3h-3z" fill="currentColor" /></Svg></button>
            <button aria-label="Filtrar objetos"><Svg s={14}><path d="M5 7V1.600h5L13 4.500v7H8M9.500 1.500V5H13" stroke="currentColor" strokeWidth="1.200" /><path d="M2 6.500h6V13H2z" fill="currentColor" /></Svg></button>
          </div>
          <button aria-label="Ativar filtro" className="mb-1 ml-auto flex h-[18px] w-[9px] rounded-full bg-[#1c1c1c]"><span className="size-[9px] rounded-full bg-[#999]" /></button>
        </div>
        <div className="flex h-7 items-end border-b border-[#222] pr-1 pl-1">
          <div className="relative flex items-center">
            <select aria-label="Modo de mesclagem" className="h-[22px] w-[180px] appearance-none rounded-[3px] border border-[#3c3c3c] bg-[#262626] pl-2"><option>Normal</option></select>
            <Chevron className="pointer-events-none absolute right-0.5 text-[#6a6a6a]" />
          </div>
          <div className="mb-[5px] ml-auto"><Percent label="Opacidade:" value="100%" /></div>
        </div>
        <div className="flex h-[31px] items-center pr-1 pb-1 pl-1.5">
          Bloq.:
          <div className="ml-2.5 flex gap-2 text-[#9a9a9a]">
            <button aria-label="Bloquear pixels transparentes"><Svg s={14}><rect x="1.500" y="1.500" width="11" height="11" stroke="currentColor" /><path d="M2 2h2.500v2.500H2zM7 2h2.500v2.500H7zM4.500 4.500H7V7H4.500zM9.500 4.500H12V7H9.500zM2 7h2.500v2.500H2zM7 7h2.500v2.500H7zM4.500 9.500H7V12H4.500zM9.500 9.500H12V12H9.500z" fill="currentColor" /></Svg></button>
            <button aria-label="Bloquear pixels da imagem"><Svg s={14} vb="1 1 18 18">{brushShape}</Svg></button>
            <button aria-label="Bloquear posição"><Svg s={14} vb="1 1 18 18">{moveShape}</Svg></button>
            <button aria-label="Impedir aninhamento"><Svg s={14}><path d="M3.500 0v14M0 3.500h10M0 11.500h14M11.500 6v8" stroke="currentColor" strokeDasharray="2 1" strokeWidth="1.100" /><path d="M3.500 3.500h5l3 3v5h-8z" stroke="currentColor" strokeWidth="1.200" /><path d="M8 2.500l4.500 4.500H8z" fill="currentColor" /></Svg></button>
            <button aria-label="Bloquear tudo"><Svg s={14}><path d="M4 6V4c0-3.500 6-3.500 6 0v2" stroke="currentColor" strokeWidth="1.500" /><path d="M2 6h10v7H2z" fill="currentColor" /><path d="M6.300 8.500h1.500v2H6.300z" fill="#2e2e2e" /></Svg></button>
          </div>
          <Percent label="Preen.:" value="100%" />
        </div>
        <div className="flex flex-1 flex-col bg-[#282828] pr-4">
          <div className="flex h-[23px] items-stretch">
            <button aria-label="Visibilidade da camada" className="flex w-[30px] items-center justify-center">
              <Svg w={13} h={9}><path d="M0 4.500C3-1 10-1 13 4.500 10 10 3 10 0 4.500z" fill="#ddd" /><circle cx="6.500" cy="4.500" r="2.700" fill="#282828" /><circle cx="6.500" cy="4.500" r="1.200" fill="#ddd" /></Svg>
            </button>
            <button className="flex flex-1 items-center gap-2.5 bg-[#4a4a4a] pr-3.5 pl-1 text-[#ececec] italic">
              <span className="h-[15px] w-8 border border-[#5f6d6c] bg-[#b2e5e2]" />
              Plano de Fundo
              <Svg w={12} h={13} className="ml-auto"><path d="M3.500 5V3.500c0-3.200 5-3.200 5 0V5M1.600 5.600h8.800v6.800H1.600z" stroke="currentColor" strokeWidth="1.200" /><circle cx="6" cy="9" r="1.200" fill="currentColor" /></Svg>
            </button>
          </div>
        </div>
        <div className="flex h-[25px] items-center justify-end gap-[13px] border-t border-[#1c1c1c] pr-[26px] text-[#dadada]">
          <button aria-label="Vincular camadas" className="text-[#808080]"><Svg s={14}><path d="M6 4.500H3.500c-3.300 0-3.300 5 0 5H6M8 4.500h2.500c3.300 0 3.300 5 0 5H8M4 7h6" stroke="currentColor" strokeWidth="1.300" /></Svg></button>
          <button aria-label="Adicionar estilo" className="w-3.5 font-[family-name:'Liberation_Serif',serif] text-[14px] leading-none text-[#9a9a9a] italic">fx</button>
          <button aria-label="Adicionar máscara"><Svg s={14}><path d="M1 2h12v10H1z" fill="currentColor" /><circle cx="7" cy="7" r="3" fill="#2e2e2e" /></Svg></button>
          <button aria-label="Camada de ajuste"><Svg s={14}>{maskCircle}<path d="M10.500 12.500h3.500L12.300 14z" fill="#fff" /></Svg></button>
          <button aria-label="Novo grupo"><Svg s={14}><path d="M1 2h5l1.500 2H13v8H1z" fill="currentColor" /></Svg></button>
          <button aria-label="Nova camada"><Svg s={14}><rect x="1.600" y="1.600" width="10.800" height="10.800" stroke="currentColor" strokeWidth="1.200" /><path d="M7 4v6M4 7h6" stroke="currentColor" strokeWidth="1.300" /></Svg></button>
          <button aria-label="Excluir camada" className="text-[#999]"><Svg s={14}>{trashShape(1)}</Svg></button>
        </div>
      </div>
    </Panel>
  );
}

function HistoryPanel() {
  return (
    <Panel tabs={["Histórico", "Comentários"]} className="flex-1">
      <div className="flex flex-1 flex-col text-[#b5b5b5]">
        <div className="mr-4 flex h-[30px] items-center border-b border-[#4a4a4a] pl-[5px]">
          <Svg s={15} vb="0 0 20 20" className="text-[#ddd]">{TOOLS[10].icon}</Svg>
          <span className="mr-[5px] ml-[5px] h-[15px] w-8 border border-[#767676] bg-[#b2e5e2]" />
          Sem Título-2
        </div>
        <div className="flex flex-1 flex-col bg-[#282828] pt-0.5 pr-4">
          <button className="flex h-[22px] items-center bg-[#4a4a4a] pl-1.5 text-left text-[#e6e6e6]">
            <span className="size-[11px] border-t border-l border-[#222]" />
            <Svg w={14} h={15} className="mr-3 ml-[15px]"><path d="M0 0h9v3H0z" fill="#d8d8d8" /><rect x=".6" y="2.600" width="12.800" height="11.800" stroke="#d8d8d8" strokeWidth="1.200" /><path d="M2 5.500h10M2 8h10M2 10.500h10M2 12.800h7" stroke="#d8d8d8" strokeWidth="1.100" /></Svg>
            <span className="pb-0.5">Novo</span>
          </button>
        </div>
        <div className="flex h-6 items-center justify-end border-t border-[#1c1c1c] pr-[26px] text-[#dadada]">
          <button aria-label="Criar documento" className="mr-[18px]"><Svg s={14}><path d="M5 1h4v4h4v8H4v-2.500h4v-5H5zM10 1l3 3h-3z" fill="currentColor" /><path d="M0 8h7M3.500 4.500v7" stroke="currentColor" strokeWidth="1.700" /></Svg></button>
          <button aria-label="Criar instantâneo" className="mr-3.5"><Svg s={14}><path d="M.5 3.500H4L5 1.500h4l1 2h3.500V12H.5z" fill="currentColor" /><circle cx="7" cy="7.500" r="2.300" stroke="#2e2e2e" strokeWidth="1.300" /></Svg></button>
          <button aria-label="Excluir estado"><Svg s={14}>{trashShape(2)}</Svg></button>
        </div>
      </div>
    </Panel>
  );
}

function Dock() {
  return (
    <div className="flex shrink-0 border-l border-[#1a1a1a] font-[family-name:'DejaVu_Sans_Condensed','DejaVu_Sans',sans-serif] text-[10px]">
      <div className="flex w-10 flex-col border-r-2 border-l border-[#1a1a1a] bg-[#2e2e2e]">
        <div className="flex h-[13px] items-center justify-end border-b border-[#1a1a1a] bg-[#232323] pr-1.5"><DoubleChevron dir="left" /></div>
        <div className="flex h-[69px] flex-col items-center gap-1.5 border-b border-[#1a1a1a] pt-[3px] text-[#d8d8d8]">
          <Grip />
          <button aria-label="Configurações do pincel"><Svg w={22} h={20}><path d="M1 2h2v2H1zM1 5h2v2H1zM1 8h2v2H1zM4 2h4v1.300H4zM4 5h4v1.300H4zM4 8h3v1.300H4z" fill="currentColor" /><g transform="translate(4 1) scale(.95)">{brushShape}</g></Svg></button>
          <button aria-label="Pincéis"><Svg w={22} h={20}><path d="M1 5.500C4 2 8 3.500 9.500 5.500H21v1.800H9.500C8 9.500 4 9 1 5.500z" fill="currentColor" /><path d="M3 13.500h10c2-.5 4-3.500 8-5v10.500c-4-1-6-3-8-3.700H3z" fill="currentColor" /></Svg></button>
        </div>
      </div>
      <div className="flex w-[302px] flex-col gap-[2px] border-r border-l border-[#1a1a1a] bg-[#1e1e1e]">
        <div className="-mb-0.5 flex h-[13px] shrink-0 items-center justify-end border-b border-[#1a1a1a] bg-[#232323] pr-1.5"><DoubleChevron dir="right" /></div>
        <ColorPanel />
        <PropertiesPanel />
        <LayersPanel />
        <HistoryPanel />
      </div>
    </div>
  );
}

/* ---------- Taskbar ---------- */

function ChromeShape() {
  return (
    <g>
      <circle cx="12" cy="12" r="12" fill="#fbc116" />
      <path d="M1.600 6A12 12 0 0 1 22.400 6L22.400 6.500H12L7.200 14.800z" fill="#ea4335" />
      <path d="M1.600 6A12 12 0 0 0 11.500 24l5.300-9.200-5 2.500-5-3z" fill="#2ba24c" />
      <circle cx="12" cy="12" r="5.800" fill="#fff" />
      <circle cx="12" cy="12" r="4.500" fill="#1a73e8" />
    </g>
  );
}

const APPS: { name: string; run?: "dot" | "bar"; icon: React.ReactNode }[] = [
  { name: "Visão de tarefas", icon: <g><path d="M6 1h18v17H6z" fill="#eee" /><path d="M0 7h18v16H0z" fill="#555" /><path d="M6 7h12v11H6z" fill="#aaa" /></g> },
  { name: "Microsoft Store", icon: <g><path d="M6.500 6V1.500h11V6" stroke="#35b5e0" strokeWidth="2" /><path d="M.5 5h23v16a3 3 0 0 1-3 3h-17a3 3 0 0 1-3-3z" fill="#eaeaea" /><path d="M7 9.500h4.500V14H7z" fill="#f25022" /><path d="M12.500 9.500H17V14h-4.500z" fill="#5fa800" /><path d="M7 15h4.500v4.500H7z" fill="#00a4ef" /><path d="M12.500 15H17v4.500h-4.500z" fill="#ffb900" /></g> },
  { name: "Alexa", icon: <g><circle cx="12" cy="12" r="10" stroke="#12c8f0" strokeWidth="4" /><path d="M11.500 18v6" stroke="#2a1810" strokeWidth="1.500" /></g> },
  { name: "Chrome", icon: <ChromeShape /> },
  { name: "Firefox", icon: <g><circle cx="12" cy="13" r="7" fill="#8b45d8" /><FaFirefoxBrowser size={24} fill="url(#fire)" /></g> },
  { name: "Opera", icon: <g><ellipse cx="12" cy="12" rx="12" ry="12" fill="#ee1c25" /><ellipse cx="12" cy="12" rx="4.800" ry="8.800" fill="#2a1612" /><path d="M16 5c4 3 4 11 0 14 8 3 8-17 0-14z" fill="#ff5a5a" /></g> },
  { name: "Opera GX", icon: <g stroke="#e0244e" strokeWidth="1.500"><circle cx="12" cy="12" r="11.200" /><ellipse cx="10" cy="12" rx="5" ry="9.500" /><ellipse cx="14" cy="12" rx="5" ry="9.500" /></g> },
  { name: "AIMP", run: "dot", icon: <g><circle cx="12" cy="12" r="12" fill="#111" /><circle cx="12" cy="12" r="9.500" fill="#f5a81c" /><path d="M12 6.500L6.500 16H14M12 6.500l5.500 9.500" stroke="#111" strokeWidth="2.200" /></g> },
  { name: "Spotify", run: "dot", icon: <g><circle cx="12" cy="12" r="11" fill="#111" /><FaSpotify size={24} color="#1ed760" /></g> },
  { name: "YouTube Music", icon: <g><circle cx="12" cy="12" r="12" fill="#f00" /><circle cx="12" cy="12" r="6.500" stroke="#fff" /><path d="M10 8.500l5.500 3.500-5.500 3.500z" fill="#fff" /></g> },
  { name: "VLC", icon: <g><path d="M3.500 17h17L22 23H2z" fill="#f08a1c" /><path d="M11 0h2l5.500 18c-2 2.500-11 2.500-13 0z" fill="#f58220" /><path d="M9.500 5h5l1.500 4.500H8zM7 13h10l1.200 4c-3 2-9.500 2-12.400 0z" fill="#eee" /></g> },
  { name: "Speedtest", icon: <g><path d="M0 0h24v24H0z" fill="#15182c" /><path d="M6.500 17.500A8 8 0 1 1 17.500 17.500" stroke="#fff" strokeWidth="2" /><path d="M11.500 13.500L16 8" stroke="#fff" strokeWidth="2" /></g> },
  { name: "Xbox", icon: <g><rect width="24" height="24" rx="2" fill="#107c10" /><g transform="translate(2 2)"><FaXbox size={20} color="#fff" /></g></g> },
  { name: "CCleaner", icon: <g><path d="M3 5l18-5v4L3 9zM3 20l18-2v3L3 24z" fill="#1c7a10" /><path d="M2 8.500l20-3V17L2 20.500z" fill="#58e010" /><path d="M8.500 8v11M15 7v11" stroke="#1c7a10" /></g> },
  { name: "Figura", run: "dot", icon: <g stroke="#9b1fa0" strokeWidth="4" strokeLinecap="round"><circle cx="11" cy="5" r="2" fill="#9b1fa0" /><path d="M11 10v3M5 11l6 2 6-2M7 20l4-6 4 6" /></g> },
  { name: "Chrome – perfil", run: "dot", icon: <ChromeShape /> },
  { name: "Photoshop", run: "bar", icon: null },
];

function TrayIcons() {
  const items: [string, React.ReactNode][] = [
    ["Spotify", <g key="i"><circle cx="8" cy="8" r="7" fill="#111" /><FaSpotify size={16} color="#1ed760" /></g>],
    ["Segurança", <g key="i"><path d="M8 0c2 1.500 5 2.500 7.500 2.500C16 9 12 14 8 16 4 14 0 9 .5 2.500 3 2.500 6 1.500 8 0z" fill="#1878d8" /><path d="M8 0v8H.8C.4 6 .4 4 .5 2.500 3 2.500 6 1.500 8 0zM8 8h7.200C14 12 11 14.500 8 16z" fill="#38a8f0" /></g>],
    ["NVIDIA", <g key="i"><path d="M0 0h16v16H0z" fill="#1b1b1b" /><path d="M7 4h7v8H7z" fill="#76b900" opacity=".6" /><path d="M2 8c2-4 7-4 9 0-2 3.500-6 4-9 0z" stroke="#76b900" strokeWidth="1.500" fill="#1b1b1b" /><circle cx="7" cy="8" r="1.500" fill="#76b900" /></g>],
    ["CTRL", <g key="i"><path d="M0 0h16v16H0z" fill="#000" /><path d="M3 2c3-2 7-2 10 0" stroke="#2bc4a0" /><path d="M3 14c3 2 7 2 10 0" stroke="#e04040" /><text x="1" y="10.500" fontSize="6" fontWeight="700" fill="#fff">CTRL</text></g>],
    ["Rede privada", <g key="i"><path d="M2 8h12v8H2z" fill="#fff" /><path d="M5 8V6c0-2 6-2 6 0v2M3.500 3c3-3.500 6-3.500 9 0M5.500 4.500c2-2 3-2 5 0" stroke="#fff" /><path d="M7.300 11h1.500v2H7.300z" fill="#222" /></g>],
    ["Verificado", <g key="i"><circle cx="8" cy="8" r="8" fill="#0fc818" /><path d="M4 8.500L7 11.500 12 4.500" stroke="#fff" strokeWidth="1.600" /></g>],
    ["AMD", <g key="i"><path d="M0 2l3-2h13v13l-3 3H0z" fill="#e02020" /><path d="M3 4l8 9M11 4l-8 9" stroke="#fff" strokeWidth="2.200" /></g>],
    ["Monitor de núcleos", <g key="i"><path d="M.5.500h15v15H.5z" fill="#333" stroke="#62b62f" /><g strokeWidth="2" strokeDasharray="2 1"><path d="M2 3h12" stroke="#e8e8e8" /><path d="M2 5.500h12" stroke="#f0a080" /><path d="M2 8h12" stroke="#f060b0" /><path d="M2 10.500h12" stroke="#50d0ff" /><path d="M2 13h12" stroke="#70f070" /></g></g>],
    ["USB", <g key="i" stroke="#eee" strokeWidth="1.100"><path d="M3 5h7v8c0 1.500-1 2.500-2.500 2.500h-2C4 15.500 3 14.500 3 13zM4.500 5V.6h4V5M5.500 2.500h2M8 12l2 2 4-4.500" /></g>],
    ["Windows Defender", <g key="i"><path d="M7 0c2 1.500 4.500 2.500 7 2.500C14.500 9 11 13 7 15 3 13-.5 9 0 2.500 2.500 2.500 5 1.500 7 0z" fill="#2b9be8" /><circle cx="11" cy="11" r="5" fill="#118a20" /><path d="M8.800 11l1.500 1.700 3-3.500" stroke="#fff" /></g>],
    ["Creative Cloud", <g key="i" stroke="#fff" strokeWidth="1.600" transform="translate(1 1) scale(.86)"><circle cx="5.500" cy="8" r="4" /><path d="M5 8C8 12 15 12 15 7.500 15 3 9 3 8 7c0 2 3 2.500 4 .5" /></g>],
    ["Ferramenta", <g key="i"><path d="M4 1h8l4 7-4 7H4L0 8z" fill="#0a3c70" /><path d="M3 13l6-6M10 3l-2 4 4 1 1-3M2.500 11.500l3 3" stroke="#fff" strokeWidth="1.600" /></g>],
    ["Bluetooth", <g key="i"><rect x="2" y="0" width="12" height="16" rx="6" fill="#0a84f0" /><g transform="translate(3 3)"><FaBluetoothB size={10} color="#fff" /></g></g>],
    ["OneDrive", <g key="i"><path d="M3.500 13C-1 13-.5 8 3 8c.5-4 6-5 8-1.500 5-.5 6.500 6.500 1.500 6.500z" fill="#f2f2f2" /><path d="M3 8c.5-4 6-5 8-1.500L6.500 9z" fill="#aaa" /></g>],
  ];
  return (
    <>
      {items.map(([n, ic]) => (
        <button key={n} aria-label={n} className="flex w-8 justify-center"><Svg s={16} className="overflow-visible">{ic}</Svg></button>
      ))}
    </>
  );
}

function Taskbar() {
  return (
    <footer className="flex h-[49px] shrink-0 items-center border-t border-[#54403a] bg-[linear-gradient(to_right,#241718,#341a07_7%,#371808_10%,#291616_14%,#281517_27%,#2e1b08_33%,#331808_40%,#2a1615_46%,#2d1b08_53%,#301809_60%,#271516_69%,#2c1a0a_74%,#35180a_78%,#2b1515_86%,#311c0b_94%,#2c1612)] text-white">
      <div className="flex flex-1 items-center">
        <button aria-label="Widgets" className="ml-5">
          <Svg w={24} h={22}><rect width="24" height="22" rx="1" fill="#0b62b4" /><path d="M2 2h9v18H2z" fill="#f4f4f4" /><path d="M13 2h9v10h-9z" fill="#08d5ff" /><path d="M13 12h9v4h-9z" fill="#1fa6f8" /><path d="M13 16h9v4h-9z" fill="#0878d8" /></Svg>
        </button>
      </div>
      <div className="ml-3 flex items-center">
        <button aria-label="Iniciar" className="mr-3">
          <Svg s={24}><defs><linearGradient id="win" x1="0" y1="0" x2="1" y2="1"><stop stopColor="#2fe6fb" /><stop offset="1" stopColor="#0590f0" /></linearGradient><linearGradient id="fire" x1="1" y1="0" x2="0" y2="1"><stop stopColor="#ffe03a" /><stop offset=".5" stopColor="#ff8a1c" /><stop offset="1" stopColor="#f5206c" /></linearGradient></defs><path d="M0 0h11.500v11.500H0zM12.500 0H24v11.500H12.500zM0 12.500h11.500V24H0zM12.500 12.500H24V24H12.500z" fill="url(#win)" /></Svg>
        </button>
        <label className="flex h-9 w-[220px] items-center rounded-full border border-[#66503c] bg-[#4e3b2c] pr-1.5 pl-[11px]">
          <Svg s={16}><circle cx="7" cy="7" r="5.500" stroke="#ddd" strokeWidth="1.500" /><path d="M11 11l4 4" stroke="#ddd" strokeWidth="1.600" /></Svg>
          <input aria-label="Pesquisar" placeholder="Pesquisar" className="ml-2.5 w-20 bg-transparent text-xs text-[#ddd] outline-none placeholder:text-[#d5ccc4]" />
          <Svg w={46} h={22} className="ml-auto">
            <ellipse cx="23" cy="13" rx="22" ry="8.500" fill="#dfe3ee" />
            <ellipse cx="23" cy="12" rx="17" ry="6" fill="#c4c9dc" />
            <path d="M5 11l14-8 9 10-8 5-12-2z" fill="#e89a5a" />
            <path d="M22 6l15-3 4 6-10 7z" fill="#f0b878" />
            <path d="M7 13l12 1 12 2-12 2.500z" fill="#d85a3a" />
            <circle cx="16" cy="6" r="3.500" fill="#e03030" /><circle cx="19" cy="11" r="3.500" fill="#ee4040" /><circle cx="24" cy="12" r="2.500" fill="#fff" />
            <circle cx="33" cy="15" r="3" fill="#4a4a9c" /><circle cx="38" cy="13" r="2.300" fill="#5c5cb0" />
          </Svg>
        </label>
        <div className="ml-0.5 flex">
          {APPS.map((a, i) => (
            <button key={a.name} aria-label={a.name} className="relative flex h-12 w-11 items-center justify-center">
              {a.icon ? (
                <Svg s={24} className="overflow-visible">{a.icon}</Svg>
              ) : (
                <span className="flex size-10 items-center justify-center rounded border border-[#473634] bg-[#3a2a28]">
                  <span className="flex size-[22px] items-center justify-center rounded bg-[#001e36] text-[11px] font-bold text-[#31a8ff]">Ps</span>
                </span>
              )}
              {i === 12 && <span className="absolute top-1 right-1 flex size-4 items-center justify-center rounded-full bg-[#1cb4e8] text-[10px] text-black">8</span>}
              {i === 14 && (
                <Svg s={16} className="absolute top-1 right-1"><circle cx="8" cy="8" r="8" fill="#16a832" /><path d="M4 8.500l3 3 5-6" stroke="#fff" strokeWidth="2" /></Svg>
              )}
              {i === 15 && (
                <Svg s={16} className="absolute top-1 right-1"><circle cx="8" cy="8" r="8" fill="#f5761c" /><path d="M2 9l7-5 5 1M3 10h11M4 13l9-2M7 8l7-1" stroke="#ffe0c0" strokeWidth="1.300" /></Svg>
              )}
              {i === 7 && (
                <Svg w={9} h={14} className="absolute top-2 right-1.5"><path d="M1 1v12l2.500-2L8 7z" fill="#fff" stroke="#222" strokeWidth=".7" /></Svg>
              )}
              {a.run === "dot" && <span className="absolute bottom-1 h-[3px] w-1.5 rounded-full bg-[#a59a98]" />}
              {a.run === "bar" && <span className="absolute bottom-1 h-[3px] w-4 rounded-full bg-[#1fa8e0]" />}
            </button>
          ))}
        </div>
      </div>
      <div className="flex flex-1 items-center justify-end text-xs leading-4">
        <TrayIcons />
        <button className="w-11 text-center">POR<br />PTB2</button>
        <button aria-label="Rede e som" className="ml-1.5 flex items-center gap-1.5">
          <Svg w={18} h={18}><path d="M11 3H1.600v10H12V9M4 16.400h6M7 13v3M12.500 2h4v4.500h-4zM14.500 6.500V16H12" stroke="#fff" strokeWidth="1.200" /></Svg>
          <Svg w={18} h={16}><path d="M1 5.500h3L8 2v12l-4-3.500H1z" stroke="#fff" strokeWidth="1.200" /><path d="M10 5.500c1.300 1.500 1.300 3.500 0 5" stroke="#fff" strokeWidth="1.200" /><path d="M12 3.500c2.500 2.500 2.500 6.500 0 9M14 2c3.300 3.500 3.300 8.500 0 12" stroke="#7a6a64" strokeWidth="1.200" /></Svg>
        </button>
        <button className="ml-3.5 text-right">16:32:15<br />14/10/2024</button>
        <button aria-label="Notificações do sistema" className="ml-[9px] text-[#5fe0f5]"><FaBell size={14} /></button>
        <button aria-label="Copilot" className="relative mr-5 ml-4">
          <Svg w={26} h={24}>
            <defs><linearGradient id="cp1" x1="0" y1="0" x2="0" y2="1"><stop stopColor="#1c8cf0" /><stop offset=".6" stopColor="#30c080" /><stop offset="1" stopColor="#e8c020" /></linearGradient><linearGradient id="cp2" x1="0" y1="0" x2="0" y2="1"><stop stopColor="#b060f0" /><stop offset="1" stopColor="#f870a0" /></linearGradient></defs>
            <path d="M7 1h9c2 0 3 1 3.500 3h-3c-3 0-3.500 3-5 8-1 3-2 4-5 4H4c-3 0-4.500-2-3.500-5L3 4c.6-2 2-3 4-3z" fill="url(#cp1)" />
            <path d="M19 6h2c3 0 4 2 3 5l-1 5c-.6 2-2 3-5 3h-6c2-1 3-4 4-8 .5-2 1-5 3-5z" fill="url(#cp2)" />
          </Svg>
          <span className="absolute right-0 -bottom-0.5 rounded-xs bg-[#f5c518] px-0.5 text-[8px] leading-[8px] font-bold text-black">PRE</span>
        </button>
      </div>
    </footer>
  );
}

export default function App() {
  return (
    <div className="flex h-screen flex-col overflow-hidden bg-[#2e2e2e] font-[family-name:'Open_Sans',sans-serif] select-none">
      <TitleBar />
      <OptionsBar />
      <div className="flex min-h-0 flex-1">
        <Toolbar />
        <DocumentArea />
        <Dock />
      </div>
      <Taskbar />
    </div>
  );
}
